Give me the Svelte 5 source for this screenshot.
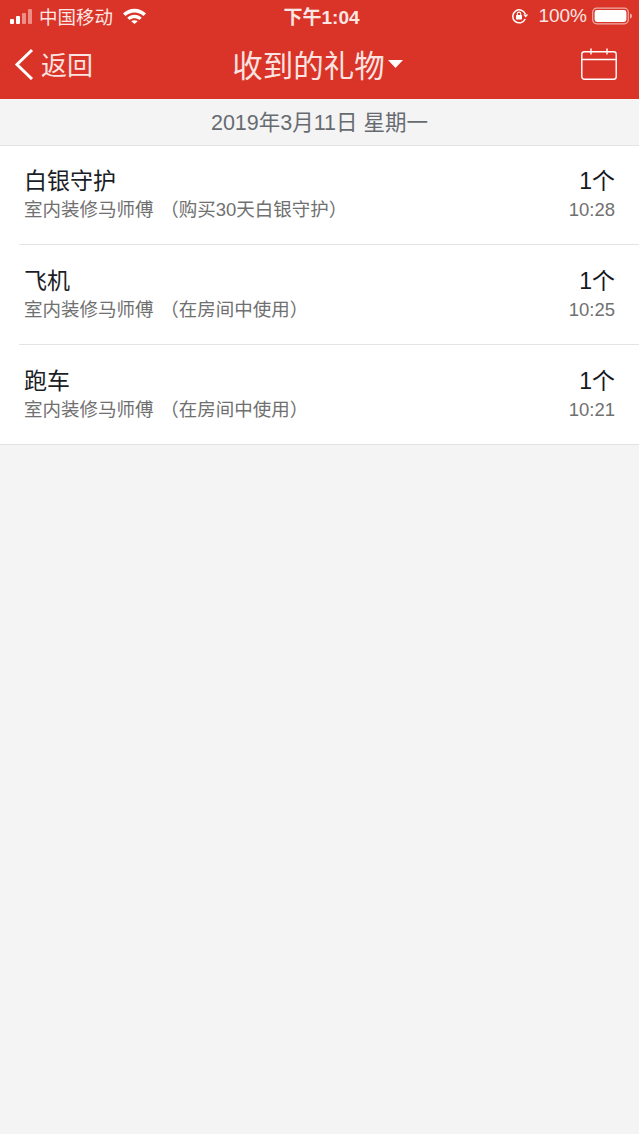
<script>
  const gifts = [
    { name: '白银守护', from: '室内装修马师傅', note: '（购买30天白银守护）', count: '1个', time: '10:28' },
    { name: '飞机', from: '室内装修马师傅', note: '（在房间中使用）', count: '1个', time: '10:25' },
    { name: '跑车', from: '室内装修马师傅', note: '（在房间中使用）', count: '1个', time: '10:21' }
  ];
</script>

<div class="page">
  <header>
    <div class="status">
      <div class="status-left">
        <span class="signal"><i></i><i></i><i class="dim"></i><i class="dim"></i></span>
        <span class="carrier">中国移动</span>
        <svg class="wifi" width="23" height="16" viewBox="0 0 23 16">
          <path d="M0 5.500C6.300 -.8 16.700 -.8 23 5.500L20.500 8C15.500 3.200 7.500 3.200 2.500 8Z" fill="#fff" />
          <path d="M4.200 9.700C8.300 5.800 14.700 5.800 18.800 9.700L16.400 12C13.600 9.500 9.400 9.500 6.600 12Z" fill="#fff" />
          <path d="M8.200 13.300C10 11.800 13 11.800 14.800 13.300L11.500 16Z" fill="#fff" />
        </svg>
      </div>
      <div class="clock">下午1:04</div>
      <div class="status-right">
        <svg class="lock" width="18" height="16" viewBox="0 0 18 16">
          <path d="M14.400 6.200A6.500 6.500 0 1 0 14.200 11" fill="none" stroke="#fff" stroke-width="1.500" />
          <path d="M12.200 6.400L17.200 6.400L14.700 9.400Z" fill="#fff" />
          <rect x="5" y="7" width="6" height="4.400" rx=".6" fill="#fff" />
          <path d="M6.300 7V5.800a1.700 1.700 0 0 1 3.400 0V7" fill="none" stroke="#fff" stroke-width="1.100" />
        </svg>
        <span class="pct">100%</span>
        <svg class="battery" width="41" height="18" viewBox="0 0 41 18">
          <rect x=".7" y="1.200" width="35.600" height="15.600" rx="4" fill="none" stroke="#fff" stroke-opacity=".6" stroke-width="1.200" />
          <rect x="2.600" y="3" width="31.800" height="12" rx="2.400" fill="#fff" />
          <path d="M38 6.500c1.400.3 2 1.300 2 2.500s-.6 2.200-2 2.500Z" fill="#fff" fill-opacity=".6" />
        </svg>
      </div>
    </div>
    <nav>
      <div class="back">
        <svg width="20" height="32" viewBox="0 0 20 32">
          <path d="M18 2L3 16.500L18 31" fill="none" stroke="#fff" stroke-width="3" />
        </svg>
        <span>返回</span>
      </div>
      <div class="title">
        <span>收到的礼物</span>
        <svg width="15" height="8" viewBox="0 0 15 8"><path d="M0 0H15L7.500 8Z" fill="#fff" /></svg>
      </div>
      <svg class="calendar" width="36" height="32" viewBox="0 0 36 32">
        <rect x=".8" y="3.800" width="34.400" height="27.400" rx="2.500" fill="none" stroke="#fff" stroke-width="1.400" />
        <path d="M.8 11.500H35.200M10 .5V6.500M26 .5V6.500" fill="none" stroke="#fff" stroke-width="1.400" />
      </svg>
    </nav>
  </header>

  <div class="date">2019年3月11日 星期一</div>

  <ul>
    {#each gifts as gift}
      <li>
        <div class="row">
          <div class="main">
            <div class="name">{gift.name}</div>
            <div class="sub">{gift.from} {gift.note}</div>
          </div>
          <div class="side">
            <div class="count">{gift.count}</div>
            <div class="time">{gift.time}</div>
          </div>
        </div>
      </li>
    {/each}
  </ul>
</div>

<style>
  :global(body) {
    margin: 0;
    background: #f4f4f5;
  }
  .page {
    width: 639px;
    height: 1134px;
    background: #f4f4f5;
    font-family: "Liberation Sans", "Noto Sans CJK SC", sans-serif;
    overflow: hidden;
  }
  header {
    height: 99px;
    background: #d93427;
    color: #fff;
  }
  .status {
    height: 33px;
    padding: 0 6px 2px 10px;
    box-sizing: border-box;
    display: grid;
    grid-template-columns: 1fr auto 1fr;
    align-items: center;
  }
  .status-left {
    display: flex;
    align-items: center;
  }
  .signal {
    display: flex;
    align-items: flex-end;
    gap: 2px;
    height: 15px;
    margin-top: 1px;
  }
  .signal i {
    width: 4px;
    background: #fff;
    border-radius: 1px;
  }
  .signal i:nth-child(1) { height: 5px; }
  .signal i:nth-child(2) { height: 8px; }
  .signal i:nth-child(3) { height: 11px; }
  .signal i:nth-child(4) { height: 15px; }
  .signal i.dim {
    background: #ee8f87;
  }
  .carrier {
    margin-left: 7px;
    font-size: 18.500px;
    color: #fbe6e4;
  }
  .wifi {
    margin-left: 10px;
  }
  .clock {
    font-size: 19px;
    font-weight: 700;
    color: #fbe6e4;
    margin-bottom: 1px;
  }
  .status-right {
    display: flex;
    align-items: center;
    justify-content: flex-end;
  }
  .pct {
    margin-left: 9px;
    margin-right: 5px;
    font-size: 19px;
    color: #fbe6e4;
  }
  nav {
    height: 66px;
    padding: 0 22px 5px 14px;
    box-sizing: border-box;
    display: grid;
    grid-template-columns: 1fr auto 1fr;
    align-items: center;
  }
  .back {
    display: flex;
    align-items: center;
    gap: 7px;
    font-size: 26px;
    color: #fbe3e1;
  }
  .title {
    display: flex;
    align-items: center;
    gap: 3px;
    font-size: 30.500px;
    color: #fbe3e1;
    margin-left: 4px;
  }
  .calendar {
    justify-self: end;
  }
  .date {
    height: 47px;
    box-sizing: border-box;
    padding-bottom: 3px;
    border-bottom: 1px solid #e4e4e4;
    display: flex;
    align-items: center;
    justify-content: center;
    font-size: 21.500px;
    color: #676b70;
  }
  ul {
    list-style: none;
    margin: 0;
    padding: 0;
    background: #fff;
    border-bottom: 1px solid #e2e2e2;
  }
  li {
    height: 100px;
    padding-left: 19px;
    box-sizing: border-box;
  }
  li + li .row {
    border-top: 1px solid #e4e4e4;
  }
  li:first-child {
    height: 98px;
  }
  .row {
    height: 100%;
    box-sizing: border-box;
    padding: 22px 24px 0 5px;
    display: flex;
    justify-content: space-between;
  }
  li:first-child .row {
    padding-top: 21px;
  }
  .name {
    font-size: 23px;
    line-height: 28px;
    color: #1b1e26;
  }
  .sub {
    font-size: 18.500px;
    line-height: 29px;
    color: #707070;
    white-space: pre;
    word-spacing: 1.500px;
  }
  .side {
    text-align: right;
  }
  .count {
    font-size: 23px;
    line-height: 28px;
    color: #15181f;
  }
  .time {
    font-size: 18.500px;
    line-height: 29px;
    color: #707070;
  }
</style>
